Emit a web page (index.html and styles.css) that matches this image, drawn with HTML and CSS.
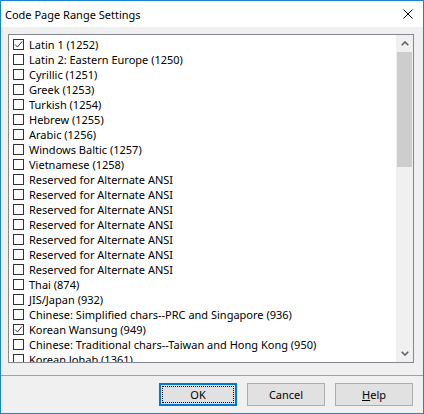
FILE: index.html
```html
<!DOCTYPE html>
<html>
<head>
<meta charset="utf-8">
<link rel="stylesheet" href="styles.css">
</head>
<body>
<div class="window">
  <div class="titlebar">
    <span class="title">Code Page Range Settings</span>
    <svg class="close" width="10" height="10" viewBox="0 0 10 10"><path d="M0.5 0.5 L9.5 9.5 M9.5 0.5 L0.5 9.5" stroke="#000" stroke-width="1" fill="none"/></svg>
  </div>
  <div class="content">
    <div class="listbox">
      <div class="items">
        <div class="item"><span class="cb checked"><svg width="9" height="9" viewBox="0 0 9 9"><polyline points="1,4.5 3.5,7 8,1.5" fill="none" stroke="#333" stroke-width="1"/></svg></span><span>Latin 1 (1252)</span></div>
        <div class="item"><span class="cb"></span><span>Latin 2: Eastern Europe (1250)</span></div>
        <div class="item"><span class="cb"></span><span>Cyrillic (1251)</span></div>
        <div class="item"><span class="cb"></span><span>Greek (1253)</span></div>
        <div class="item"><span class="cb"></span><span>Turkish (1254)</span></div>
        <div class="item"><span class="cb"></span><span>Hebrew (1255)</span></div>
        <div class="item"><span class="cb"></span><span>Arabic (1256)</span></div>
        <div class="item"><span class="cb"></span><span>Windows Baltic (1257)</span></div>
        <div class="item"><span class="cb"></span><span>Vietnamese (1258)</span></div>
        <div class="item"><span class="cb"></span><span>Reserved for Alternate ANSI</span></div>
        <div class="item"><span class="cb"></span><span>Reserved for Alternate ANSI</span></div>
        <div class="item"><span class="cb"></span><span>Reserved for Alternate ANSI</span></div>
        <div class="item"><span class="cb"></span><span>Reserved for Alternate ANSI</span></div>
        <div class="item"><span class="cb"></span><span>Reserved for Alternate ANSI</span></div>
        <div class="item"><span class="cb"></span><span>Reserved for Alternate ANSI</span></div>
        <div class="item"><span class="cb"></span><span>Reserved for Alternate ANSI</span></div>
        <div class="item"><span class="cb"></span><span>Thai (874)</span></div>
        <div class="item"><span class="cb"></span><span>JIS/Japan (932)</span></div>
        <div class="item"><span class="cb"></span><span>Chinese: Simplified chars--PRC and Singapore (936)</span></div>
        <div class="item"><span class="cb checked"><svg width="9" height="9" viewBox="0 0 9 9"><polyline points="1,4.5 3.5,7 8,1.5" fill="none" stroke="#333" stroke-width="1"/></svg></span><span>Korean Wansung (949)</span></div>
        <div class="item"><span class="cb"></span><span>Chinese: Traditional chars--Taiwan and Hong Kong (950)</span></div>
        <div class="item"><span class="cb"></span><span>Korean Johab (1361)</span></div>
      </div>
      <div class="scrollbar">
        <div class="sb-btn"><svg width="8" height="5" viewBox="0 0 8 5"><polyline points="0.7,4.3 4,1 7.3,4.3" fill="none" stroke="#606060" stroke-width="1.6"/></svg></div>
        <div class="sb-thumb"></div>
        <div class="sb-track"></div>
        <div class="sb-btn"><svg width="8" height="5" viewBox="0 0 8 5"><polyline points="0.7,0.7 4,4 7.3,0.7" fill="none" stroke="#606060" stroke-width="1.6"/></svg></div>
      </div>
    </div>
  </div>
  <div class="separator"></div>
  <div class="buttons">
    <button class="btn default"><span class="focus">OK</span></button>
    <button class="btn">Cancel</button>
    <button class="btn"><span class="ul">H</span>elp</button>
  </div>
</div>
</body>
</html>
```
FILE: styles.css
```css
html, body {
  margin: 0;
  padding: 0;
  background: #f0f0f0;
}
.window {
  width: 424px;
  height: 414px;
  box-sizing: border-box;
  border: 1px solid #1883d7;
  background: #f0f0f0;
  display: flex;
  flex-direction: column;
  font-family: "Noto Sans", "Open Sans", sans-serif;
  font-size: 11px;
  color: #000;
}
.titlebar {
  height: 26px;
  background: #fff;
  display: flex;
  align-items: center;
  justify-content: space-between;
  padding: 0 10px 0 4px;
  flex: none;
}
.title {
  font-size: 11px;
}
.close {
  display: block;
}
.content {
  padding: 7px 9px 0 7px;
  flex: none;
}
.listbox {
  height: 329px;
  box-sizing: border-box;
  border: 1px solid #828790;
  background: #fff;
  display: flex;
}
.items {
  flex: 1;
  overflow: hidden;
  padding: 2px 0 0 4px;
  white-space: nowrap;
}
.item {
  height: 15px;
  display: flex;
  align-items: center;
}
.cb {
  width: 11px;
  height: 11px;
  box-sizing: border-box;
  border: 1px solid #333;
  background: #fff;
  margin-right: 5px;
  display: flex;
  align-items: center;
  justify-content: center;
  flex: none;
}
.cb svg {
  display: block;
}
.scrollbar {
  width: 17px;
  background: #f0f0f0;
  display: flex;
  flex-direction: column;
  flex: none;
}
.sb-btn {
  height: 17px;
  display: flex;
  align-items: center;
  justify-content: center;
  flex: none;
}
.sb-btn svg {
  display: block;
}
.sb-thumb {
  height: 115px;
  margin: 0 1px;
  background: #cdcdcd;
  flex: none;
}
.sb-track {
  flex: 1;
}
.separator {
  height: 1px;
  background: #a0a0a0;
  margin-top: 12px;
  flex: none;
}
.buttons {
  display: flex;
  justify-content: flex-end;
  gap: 10px;
  padding: 7px 10px 0 0;
}
.btn {
  width: 78px;
  height: 23px;
  box-sizing: border-box;
  border: 1px solid #adadad;
  background: #e1e1e1;
  font-family: inherit;
  font-size: 11px;
  color: #000;
  padding: 0;
  margin: 0;
  display: flex;
  align-items: center;
  justify-content: center;
}
.btn.default {
  border: 2px solid #0078d7;
  padding: 1px;
}
.focus {
  flex: 1;
  align-self: stretch;
  display: flex;
  align-items: center;
  justify-content: center;
  border: 1px dotted #000;
}
.ul {
  text-decoration: underline;
}
```
